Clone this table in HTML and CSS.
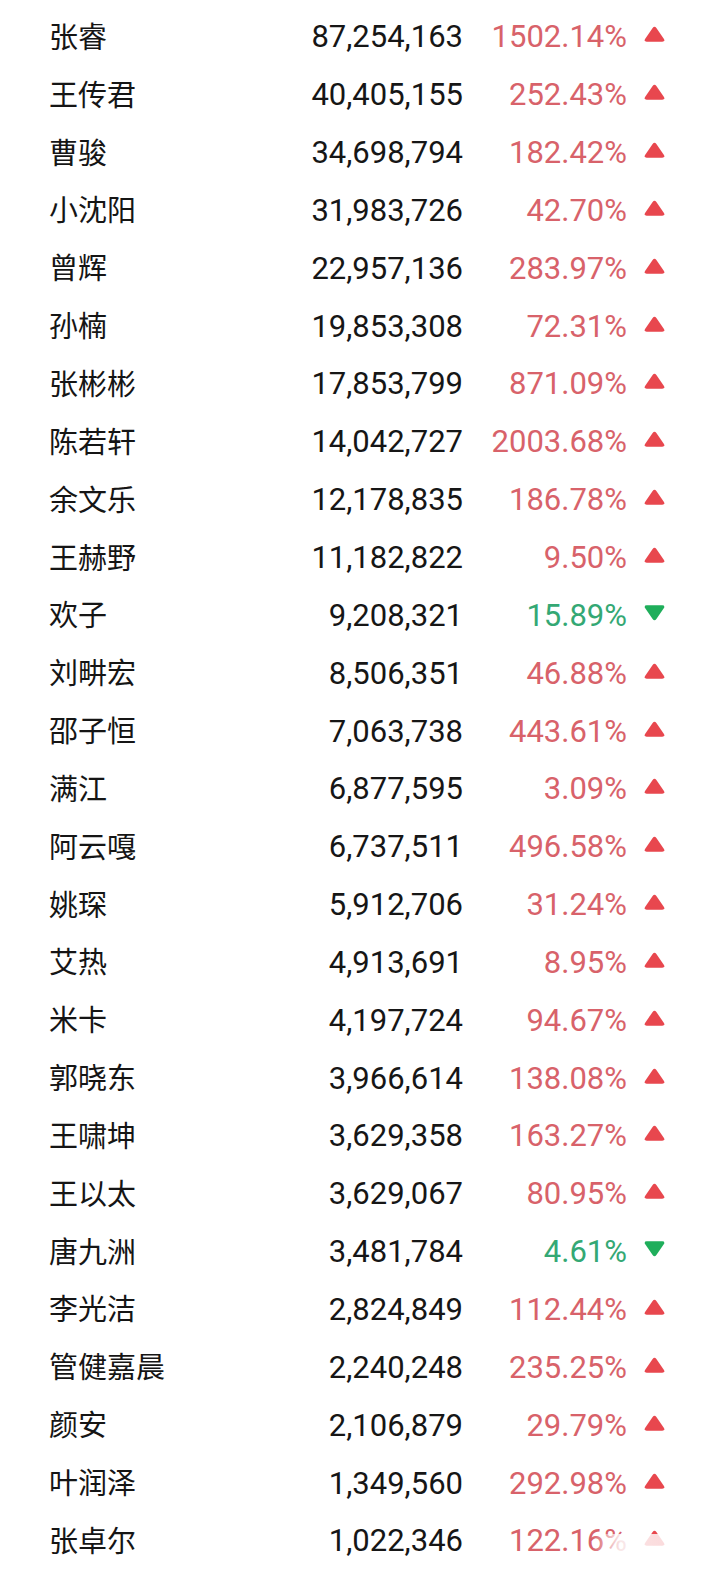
FILE: index.html
```html
<!DOCTYPE html>
<html lang="zh-CN">
<head>
    <meta charset="UTF-8">
    <title>榜单</title>
    <link rel="stylesheet" href="styles.css">
</head>
<body>
    <div class="rank-list" id="rank-list"></div>
    <div class="watermark"></div>

    <script>
        const rows = [
            ['张睿', '87,254,163', '1502.14%', 'up'],
            ['王传君', '40,405,155', '252.43%', 'up'],
            ['曹骏', '34,698,794', '182.42%', 'up'],
            ['小沈阳', '31,983,726', '42.70%', 'up'],
            ['曾辉', '22,957,136', '283.97%', 'up'],
            ['孙楠', '19,853,308', '72.31%', 'up'],
            ['张彬彬', '17,853,799', '871.09%', 'up'],
            ['陈若轩', '14,042,727', '2003.68%', 'up'],
            ['余文乐', '12,178,835', '186.78%', 'up'],
            ['王赫野', '11,182,822', '9.50%', 'up'],
            ['欢子', '9,208,321', '15.89%', 'down'],
            ['刘畊宏', '8,506,351', '46.88%', 'up'],
            ['邵子恒', '7,063,738', '443.61%', 'up'],
            ['满江', '6,877,595', '3.09%', 'up'],
            ['阿云嘎', '6,737,511', '496.58%', 'up'],
            ['姚琛', '5,912,706', '31.24%', 'up'],
            ['艾热', '4,913,691', '8.95%', 'up'],
            ['米卡', '4,197,724', '94.67%', 'up'],
            ['郭晓东', '3,966,614', '138.08%', 'up'],
            ['王啸坤', '3,629,358', '163.27%', 'up'],
            ['王以太', '3,629,067', '80.95%', 'up'],
            ['唐九洲', '3,481,784', '4.61%', 'down'],
            ['李光洁', '2,824,849', '112.44%', 'up'],
            ['管健嘉晨', '2,240,248', '235.25%', 'up'],
            ['颜安', '2,106,879', '29.79%', 'up'],
            ['叶润泽', '1,349,560', '292.98%', 'up'],
            ['张卓尔', '1,022,346', '122.16%', 'up']
        ];

        const upIcon = '<svg viewBox="0 0 20 15" width="21" height="16"><path d="M8.2 1.8 Q10 -0.6 11.8 1.8 L19 12.2 Q20.2 14.8 17.4 14.8 L2.6 14.8 Q-0.2 14.8 1 12.2 Z"/></svg>';
        const downIcon = '<svg viewBox="0 0 20 15" width="21" height="16"><path d="M8.2 13.2 Q10 15.6 11.8 13.2 L19 2.8 Q20.2 0.2 17.4 0.2 L2.6 0.2 Q-0.2 0.2 1 2.8 Z"/></svg>';

        const list = document.getElementById('rank-list');
        rows.forEach(([name, count, change, dir]) => {
            const row = document.createElement('div');
            row.className = 'rank-row ' + dir;
            row.innerHTML =
                `<span class="name">${name}</span>` +
                `<span class="count">${count}</span>` +
                `<span class="change">${change}</span>` +
                `<span class="trend">${dir === 'up' ? upIcon : downIcon}</span>`;
            list.appendChild(row);
        });
    </script>
</body>
</html>
```

FILE: styles.css
```css
* {
    box-sizing: border-box;
    margin: 0;
    padding: 0;
}
body {
    background: #ffffff;
    width: 720px;
    height: 1569px;
    overflow: hidden;
    position: relative;
}
.rank-list {
    padding: 6px 0 0 49px;
}
.rank-row {
    display: grid;
    grid-template-columns: 200px 214px 164px 17px 21px;
    align-items: center;
    height: 57.85px;
}
.name {
    font-family: "Noto Sans CJK SC", sans-serif;
    font-size: 29px;
    color: #151515;
}
.count,
.change {
    font-family: Roboto, "Noto Sans", sans-serif;
    font-size: 31px;
    text-align: right;
    color: #161616;
    padding-top: 4px;
}
.change {
    grid-column: 3;
    color: #d8626a;
}
.trend {
    grid-column: 5;
    display: flex;
    align-items: center;
    margin-top: -1px;
}
.trend svg {
    fill: #e8474e;
}
.down .change {
    color: #34a874;
}
.down .trend svg {
    fill: #1fae5b;
}
.watermark {
    position: absolute;
    left: 592px;
    top: 1534px;
    width: 128px;
    height: 35px;
    background: linear-gradient(90deg, rgba(255,255,255,0) 0%, rgba(255,255,255,0.85) 22%, rgba(255,255,255,0.75) 100%);
}
```
